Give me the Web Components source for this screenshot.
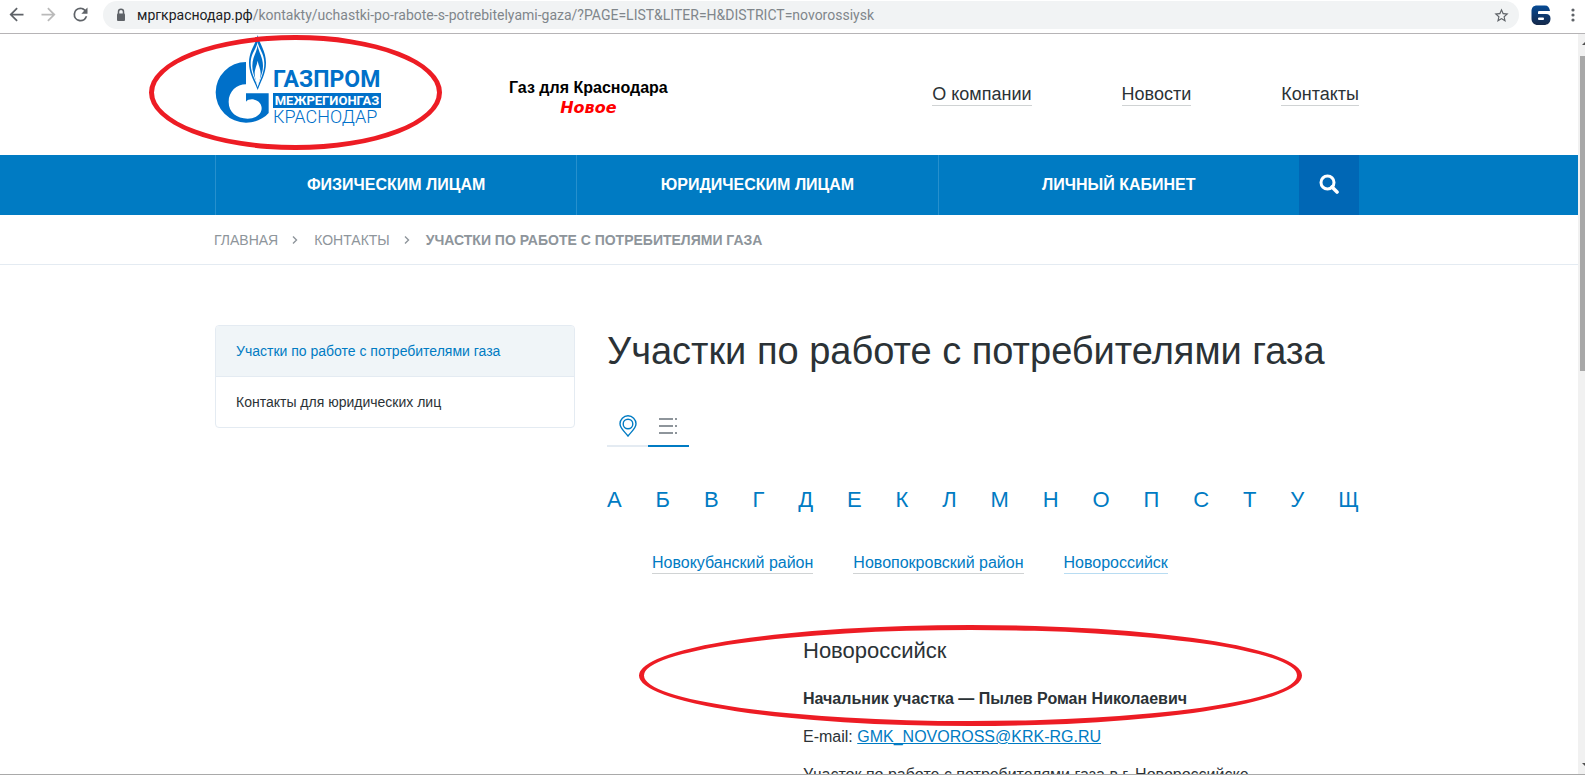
<!DOCTYPE html>
<html lang="ru">
<head>
<meta charset="utf-8">
<title>Участки по работе с потребителями газа</title>
<style>
  html, body { margin: 0; height: 100%; }
  body { font: 16px/22px "Liberation Sans", Arial, sans-serif; color: #2b3236; background: #fff; }
</style>
</head>
<body>
<browser-window>
  <browser-bar slot="bar" host="мргкраснодар.рф" path="/kontakty/uchastki-po-rabote-s-potrebitelyami-gaza/?PAGE=LIST&amp;LITER=H&amp;DISTRICT=novorossiysk"></browser-bar>
  <site-header></site-header>
  <main-nav></main-nav>
  <bread-crumbs></bread-crumbs>
  <page-content>
    <side-menu slot="side"></side-menu>
    <h1 slot="title">Участки по работе с потребителями газа</h1>
    <view-tabs></view-tabs>
    <letter-index letters="АБВГДЕКЛМНОПСТУЩ"></letter-index>
    <district-links></district-links>
    <district-card>
      <span slot="name">Новороссийск</span>
    </district-card>
  </page-content>
</browser-window>

<script>
const define = (name, html, setup) => {
  const template = document.createElement('template');
  template.innerHTML = html;
  customElements.define(name, class extends HTMLElement {
    constructor() {
      super();
      this.attachShadow({ mode: 'open' }).append(template.content.cloneNode(true));
    }
    connectedCallback() {
      if (setup) setup(this.shadowRoot, this);
    }
  });
};

define('browser-window', `
  <style>
    :host { display: flex; flex-direction: column; height: 100vh; box-sizing: border-box; border-bottom: 1px solid #a9a9a9; overflow: hidden; }
    .view { flex: 1; min-height: 0; display: flex; }
    .page { flex: 1; min-width: 0; overflow: hidden; }
  </style>
  <slot name="bar"></slot>
  <div class="view">
    <div class="page"><slot></slot></div>
    <scroll-strip></scroll-strip>
  </div>`);

define('scroll-strip', `
  <style>
    :host { display: flex; flex-direction: column; width: 7px; overflow: hidden; background: #f1f1f1; }
    svg { display: block; flex: none; }
    .track { flex: 1; padding: 5px 0 0 2px; }
    .thumb { width: 15px; height: 45%; min-height: 40px; background: #a8a8a8; }
  </style>
  <svg width="17" height="17" viewBox="0 0 17 17"><path d="M4 11l4.500-4.500L13 11z" fill="#505050"/></svg>
  <div class="track"><div class="thumb"></div></div>
  <svg width="17" height="17" viewBox="0 0 17 17"><path d="M4 6l4.500 4.500L13 6z" fill="#505050"/></svg>`);

define('browser-bar', `
  <style>
    :host { display: flex; align-items: center; height: 29px; padding: 0 2px 4px 0; flex: none; background: #fff; border-bottom: 1px solid #b6b4b6; }
    button { width: 32px; height: 28px; padding: 0; border: 0; background: none; display: flex; align-items: center; justify-content: center; color: #5f6368; }
    button[disabled] { color: #bababa; }
    .pill { flex: 1; min-width: 0; display: flex; align-items: center; height: 28px; margin: 1px 12px 0 7px; padding: 0 10px 0 12px; border-radius: 14px; background: #f1f3f4; font: 14px/20px Roboto, sans-serif; }
    .pill svg { flex: none; }
    label { margin-left: 10px; color: #202124; }
    input { flex: 1; min-width: 0; border: 0; padding: 0; margin: 0; background: none; font: inherit; color: #80868b; outline: 0; }
    .pill button { width: 16px; }
    .ext { width: 20px; }
    .menu { width: 20px; margin-left: 12px; }
  </style>
  <button aria-label="Назад"><svg width="21" height="21" viewBox="0 0 24 24"><path fill="currentColor" d="M20 11H7.830l5.590-5.590L12 4l-8 8 8 8 1.410-1.410L7.830 13H20v-2z"/></svg></button>
  <button aria-label="Вперёд" disabled><svg width="21" height="21" viewBox="0 0 24 24"><path fill="currentColor" d="M12 4l-1.410 1.410L16.170 11H4v2h12.170l-5.580 5.590L12 20l8-8z"/></svg></button>
  <button aria-label="Обновить"><svg width="21" height="21" viewBox="0 0 24 24"><path fill="currentColor" d="M17.650 6.350A7.960 7.960 0 0 0 12 4a8 8 0 1 0 7.730 10h-2.080A6 6 0 1 1 12 6c1.660 0 3.140.690 4.220 1.780L13 11h7V4l-2.350 2.350z"/></svg></button>
  <div class="pill">
    <svg width="12" height="14" viewBox="0 0 12 14"><path d="M3.500 6V3.800a2.500 2.500 0 0 1 5 0V6" fill="none" stroke="#5f6368" stroke-width="1.500"/><rect x="2" y="5.500" width="8" height="7.500" rx="1" fill="#5f6368"/></svg>
    <label for="url"></label>
    <input id="url" type="text" spellcheck="false">
    <button aria-label="Добавить в закладки"><svg width="17" height="17" viewBox="0 0 24 24"><path fill="currentColor" d="M22 9.240l-7.190-.620L12 2 9.190 8.630 2 9.240l5.460 4.730L5.820 21 12 17.270 18.180 21l-1.630-7.030L22 9.240zM12 15.400l-3.760 2.270 1-4.280-3.320-2.880 4.380-.380L12 6.100l1.710 4.040 4.380.380-3.320 2.880 1 4.280L12 15.400z"/></svg></button>
  </div>
  <button class="ext" aria-label="Расширение"><svg width="20" height="20" viewBox="0 0 20 20"><defs><linearGradient id="g" x2="0" y2="1"><stop offset="0" stop-color="#064a94"/><stop offset="1" stop-color="#15294a"/></linearGradient></defs><path fill="url(#g)" d="M6 .500h8c3 0 4.500 2 5 5.500H8.500C7.600 6 7 6.500 7 7.300V9h8c3 0 4.500 1.500 4.500 4.500 0 4.500-3 6.500-6.500 6.500H7c-4 0-6.500-2.500-6.500-6.500v-7C.500 2.500 2.500.500 6 .500z"/><rect x="7" y="12.500" width="6" height="2.500" rx="1" fill="#fff"/></svg></button>
  <button class="menu" aria-label="Меню"><svg width="4" height="16" viewBox="0 0 4 16" fill="#5f6368"><circle cx="2" cy="3" r="1.600"/><circle cx="2" cy="8" r="1.600"/><circle cx="2" cy="13" r="1.600"/></svg></button>`,
  (root, host) => {
    root.querySelector('label').textContent = host.getAttribute('host');
    root.querySelector('input').value = host.getAttribute('path');
  });

define('red-oval', `
  <style>:host { position: absolute; box-sizing: border-box; border: 5px solid #ed1c24; border-radius: 50%; pointer-events: none; z-index: 2; }</style>`);

define('site-logo', `
  <style>
    :host { display: block; position: relative; color: #0070c9; }
    a { display: flex; gap: 4px; color: inherit; text-decoration: none; }
    .words { display: flex; flex-direction: column; width: 108px; padding-top: 33px; }
    .brand { font: bold 23px/26px Roboto, sans-serif; }
    .group { font: bold 13px/15px Roboto, sans-serif; color: #fff; background: #0070c9; text-align: center; }
    .city { font: 300 18px/18px Roboto, sans-serif; }
    red-oval { left: -66px; top: 1px; width: 293px; height: 115px; }
  </style>
  <a href="#">
    <svg width="54" height="90" viewBox="30 0 162 270" fill="currentColor" role="img" aria-label="Газпром">
      <path d="M123 84A91 91 0 0 0 123 266C150 266 175 255 191 237V178H123V203C128 196 140 195 148 197C162 200 170 211 170 222C170 242 150 254 128 254C95 254 71 235 71 204C71 172 95 151 123 151Z"/>
      <path d="M158 3C152 32 132 50 132 86C132 120 149 142 158 168C167 142 183 120 183 86C183 50 164 32 158 3Z"/>
      <path fill="#fff" d="M158 24C155 44 137 58 137 88C137 116 150 136 158 158C166 136 178 116 178 88C178 58 161 44 158 24Z"/>
      <path d="M158 34C155 56 142 70 142 96C142 110 146 122 151 134C154 140 156 150 158 156C160 150 162 140 165 134C170 122 174 110 174 96C174 70 161 56 158 34Z"/>
      <path fill="#fff" d="M158 80C156 94 149 104 149 118C149 134 155 146 158 160C161 146 167 134 167 118C167 104 160 94 158 80Z"/>
    </svg>
    <span class="words">
      <span class="brand">ГАЗПРОМ</span>
      <span class="group">МЕЖРЕГИОНГАЗ</span>
      <span class="city">КРАСНОДАР</span>
    </span>
  </a>
  <red-oval></red-oval>`);

define('site-header', `
  <style>
    :host { display: block; height: 121px; padding: 0 23px 0 19px; }
    .row { display: flex; max-width: 1144px; margin: 0 auto; }
    .slogan { margin: 44px auto 0 128px; text-align: center; font-weight: bold; line-height: 20px; color: #000; }
    .slogan em { display: block; font: italic bold 16px/20px "DejaVu Sans", sans-serif; color: #f00; }
    nav { display: flex; gap: 90px; padding-top: 50px; }
    nav a { font-size: 18px; line-height: 21px; height: 21px; color: #2b3236; text-decoration: none; border-bottom: 1px solid #d0d3d4; }
  </style>
  <div class="row">
    <site-logo></site-logo>
    <div class="slogan">Газ для Краснодара<em>Новое</em></div>
    <nav><a href="#">О компании</a><a href="#">Новости</a><a href="#">Контакты</a></nav>
  </div>`);

define('main-nav', `
  <style>
    :host { display: block; padding: 0 23px 0 19px; background: #007bc3; }
    nav { display: flex; height: 60px; max-width: 1144px; margin: 0 auto; }
    a { flex: 1; display: flex; align-items: center; justify-content: center; border-left: 1px solid #2690cd; color: #fff; font-weight: bold; text-transform: uppercase; text-decoration: none; }
    button { width: 60px; padding: 0 0 2px; border: 0; background: #0067b5; display: flex; align-items: center; justify-content: center; }
  </style>
  <nav>
    <a href="#">Физическим лицам</a>
    <a href="#">Юридическим лицам</a>
    <a href="#">Личный кабинет</a>
    <button aria-label="Поиск"><svg width="20" height="20" viewBox="0 0 20 20" fill="none" stroke="#fff"><circle cx="8.500" cy="8.500" r="6.500" stroke-width="3"/><path d="M13 13l5 5" stroke-width="3.600" stroke-linecap="round"/></svg></button>
  </nav>`);

define('bread-crumbs', `
  <style>
    :host { display: block; padding: 0 24px 0 18px; border-bottom: 1px solid #e4ebf2; }
    nav { display: flex; align-items: center; height: 49px; max-width: 1144px; margin: 0 auto; font-size: 14px; text-transform: uppercase; color: #8e959b; }
    a { color: inherit; text-decoration: none; }
    svg { margin: 0 16px 0 14px; }
  </style>
  <nav>
    <a href="#">Главная</a>
    <svg width="6" height="8" viewBox="0 0 6 8" fill="none" stroke="#8e959b" stroke-width="1.400"><path d="M1 .500L4.500 4 1 7.500"/></svg>
    <a href="#">Контакты</a>
    <svg width="6" height="8" viewBox="0 0 6 8" fill="none" stroke="#8e959b" stroke-width="1.400"><path d="M1 .500L4.500 4 1 7.500"/></svg>
    <b>Участки по работе с потребителями газа</b>
  </nav>`);

define('page-content', `
  <style>
    :host { display: block; padding: 60px 23px 0 19px; }
    .cols { display: grid; grid-template-columns: 360px minmax(0, 1fr); gap: 32px; align-items: start; max-width: 1144px; margin: 0 auto; }
    ::slotted(h1) { margin: 0; font-size: 38px; line-height: 52px; font-weight: normal; }
  </style>
  <div class="cols">
    <slot name="side"></slot>
    <main><slot name="title"></slot><slot></slot></main>
  </div>`);

define('side-menu', `
  <style>
    :host { display: block; border: 1px solid #e4ebf2; border-radius: 4px; overflow: hidden; font-size: 14px; }
    a { display: block; padding: 0 20px; line-height: 50px; color: #2b3236; text-decoration: none; }
    a + a { border-top: 1px solid #e4ebf2; }
    a[aria-current] { background: #f0f5f8; color: #007bc3; }
  </style>
  <a href="#" aria-current="page">Участки по работе с потребителями газа</a>
  <a href="#">Контакты для юридических лиц</a>`);

define('view-tabs', `
  <style>
    :host { display: flex; margin-top: 28px; }
    button { width: 41px; height: 42px; padding: 2px 0 0; border: 0; border-bottom: 2px solid #e4ebf2; background: none; display: flex; align-items: center; justify-content: center; }
    button[aria-selected=true] { border-color: #007bc3; }
  </style>
  <button role="tab" aria-selected="false" aria-label="Карта"><svg width="18" height="22" viewBox="0 0 18 22" fill="none" stroke="#007bc3" stroke-width="1.400"><path d="M9 21C6 17 1 13.500 1 8.800a8 8 0 0 1 16 0C17 13.500 12 17 9 21z"/><circle cx="9" cy="9" r="4.800"/></svg></button>
  <button role="tab" aria-selected="true" aria-label="Список"><svg width="19" height="18" viewBox="0 0 19 18" fill="#8e959b"><path d="M0 1h14v2H0zM16 1h2v2h-2zM0 8h14v2H0zM16 8h2v2h-2zM0 15h14v2H0zM16 15h2v2h-2z"/></svg></button>`);

define('letter-index', `
  <style>
    :host { display: flex; justify-content: space-between; margin-top: 40px; font-size: 22px; line-height: 25px; }
    a { color: #007bc3; text-decoration: none; }
  </style>`,
  (root, host) => {
    for (const letter of host.getAttribute('letters')) {
      const a = document.createElement('a');
      a.href = '#';
      a.textContent = letter;
      root.append(a);
    }
  });

define('district-links', `
  <style>
    :host { display: flex; gap: 40px; margin-top: 40px; padding-left: 45px; line-height: 21px; }
    a { color: #007bc3; text-decoration: none; border-bottom: 1px solid #d0d3d4; }
    a[aria-current] { border-color: #b8dcf2; }
  </style>
  <a href="#">Новокубанский район</a>
  <a href="#">Новопокровский район</a>
  <a href="#" aria-current="true">Новороссийск</a>`);

define('district-card', `
  <style>
    :host { display: block; margin: 64px 0 0 196px; position: relative; }
    h2 { margin: 0 0 24px; font-size: 22px; line-height: 26px; font-weight: normal; }
    p { margin: 0 0 16px; }
    a { color: #007bc3; }
    red-oval { left: -164px; top: -13px; width: 663px; height: 101px; }
  </style>
  <h2><slot name="name"></slot></h2>
  <p><b>Начальник участка — Пылев Роман Николаевич</b></p>
  <p>E-mail: <a href="mailto:GMK_NOVOROSS@KRK-RG.RU">GMK_NOVOROSS@KRK-RG.RU</a></p>
  <p>Участок по работе с потребителями газа в г. Новороссийске</p>
  <red-oval></red-oval>`);
</script>
</body>
</html>
